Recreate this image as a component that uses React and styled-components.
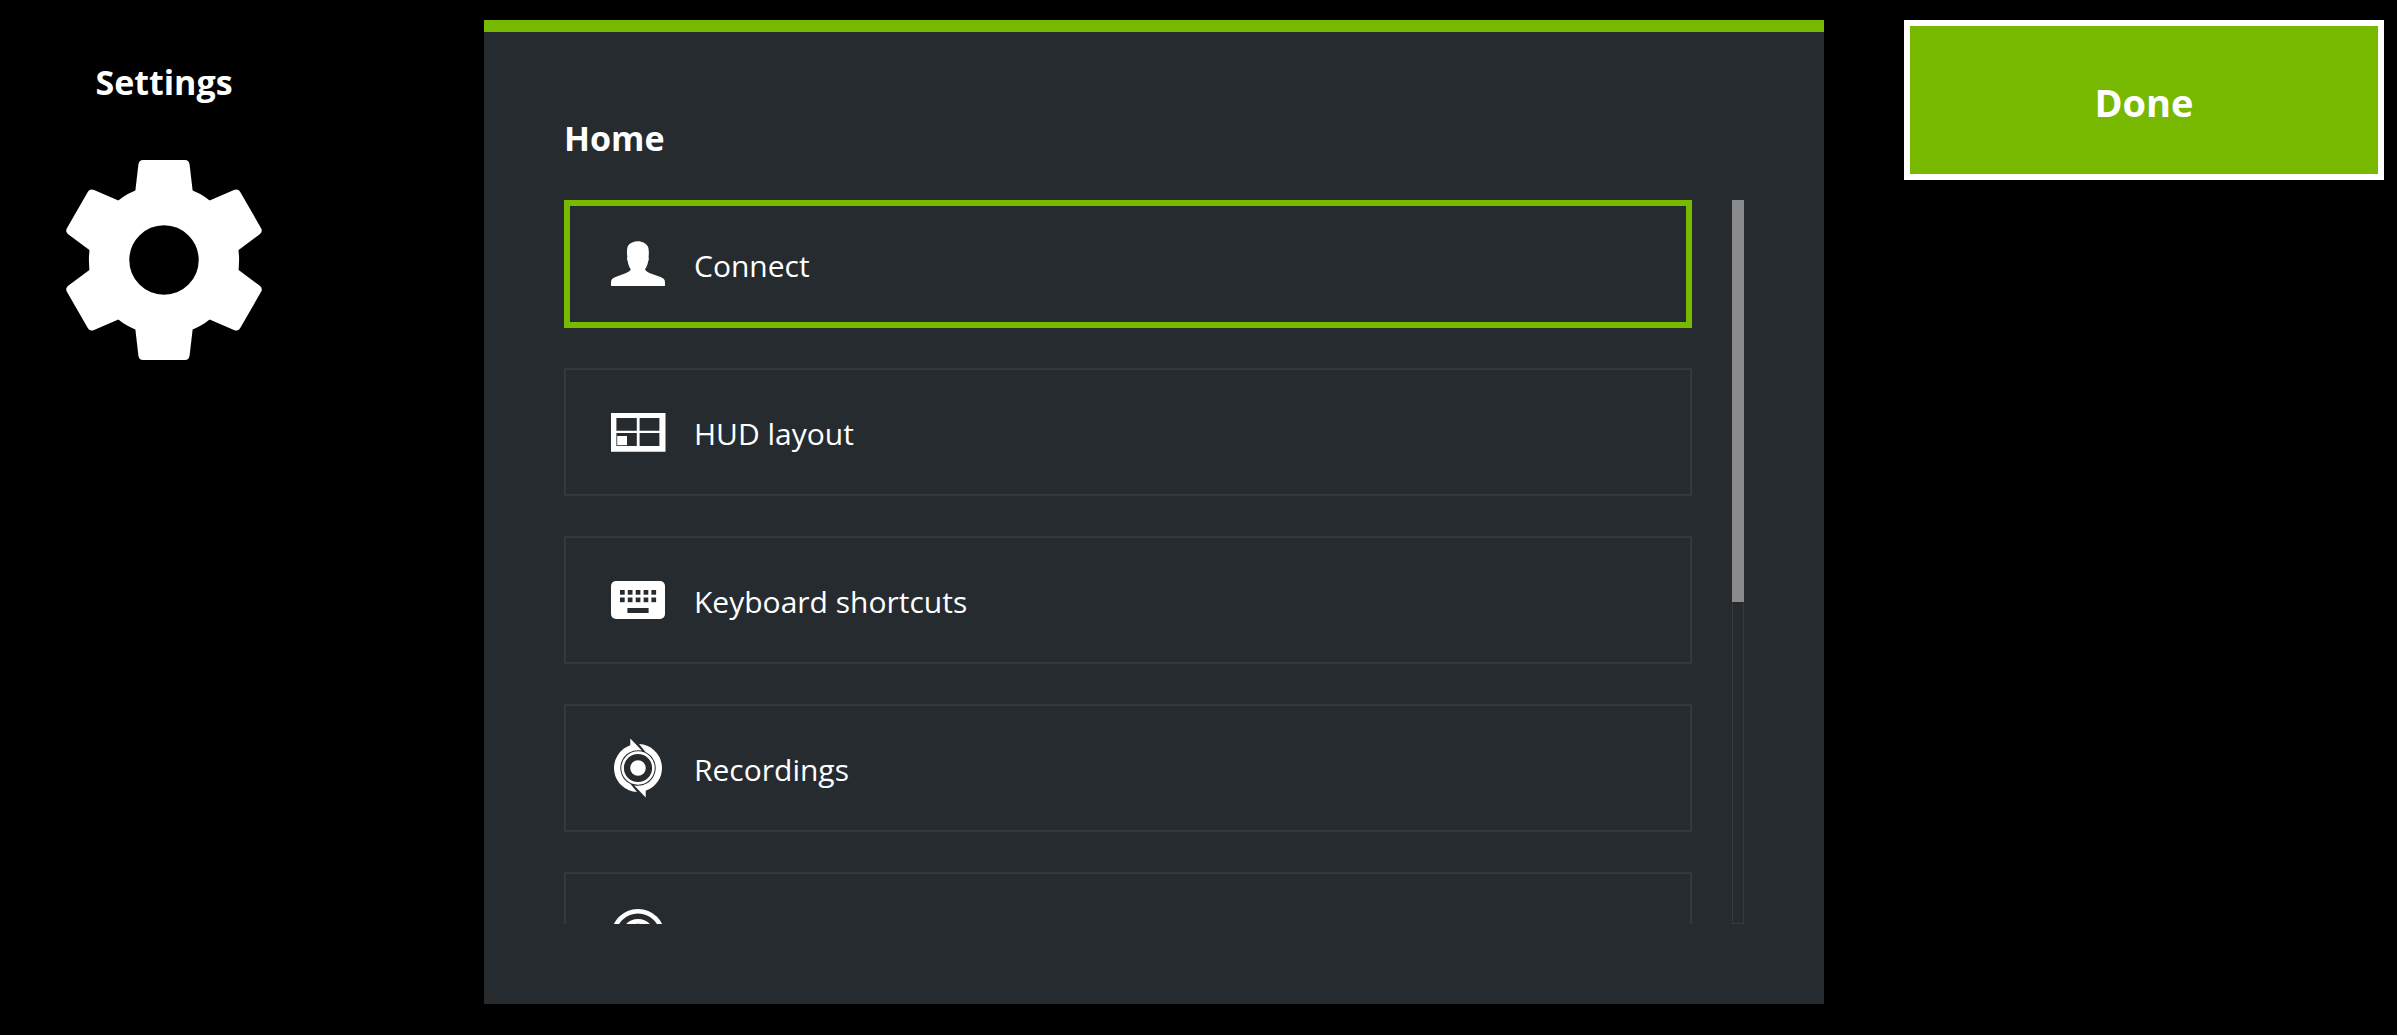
import React, { useState } from "react";
import styled, { createGlobalStyle } from "styled-components";

const GlobalStyle = createGlobalStyle`
  * {
    box-sizing: border-box;
  }

  body {
    margin: 0;
    background: #000;
    color: #fff;
    font-family: "Segoe UI", "Open Sans", "Noto Sans", sans-serif;
  }

  button {
    font-family: inherit;
    color: inherit;
    cursor: pointer;
  }
`;

// Styled components
const Page = styled.div`
  display: grid;
  grid-template-columns: 404px minmax(0, 1fr) 480px;
  column-gap: 80px;
  height: 100vh;
  padding: 20px 13px 31px 0;
`;

const Sidebar = styled.aside`
  display: flex;
  flex-direction: column;
  align-items: center;
  gap: 52px;
  padding: 36px 76px 0 0;
`;

const Heading = styled.h2`
  margin: 0;
  font-size: 34px;
  line-height: 52px;
  font-weight: 700;
`;

const GearIcon = styled.svg`
  display: block;
  width: 200px;
  height: 200px;
`;

const Panel = styled.main`
  display: flex;
  flex-direction: column;
  gap: 36px;
  min-height: 0;
  padding: 80px;
  border-top: 12px solid #76b900;
  background: #262b2f;
`;

const ListArea = styled.div`
  display: flex;
  flex: 1;
  gap: 40px;
  min-height: 0;
`;

const List = styled.nav`
  display: flex;
  flex: 1;
  flex-direction: column;
  gap: 40px;
  overflow-y: auto;
  scrollbar-width: none;
`;

const Item = styled.button`
  display: flex;
  flex: none;
  align-items: center;
  gap: 26px;
  height: 128px;
  padding: 0 44px;
  border: 0;
  background: transparent;
  box-shadow: inset 0 0 0
    ${(props) => (props.$active ? "6px #76b900" : "2px #35393c")};
  text-align: left;
  outline: none;
`;

const ItemLabel = styled.span`
  padding-top: 4px;
  font-size: 30px;
  line-height: 44px;
`;

const ItemIcon = styled.svg`
  display: block;
  flex: none;
  width: 60px;
  height: 60px;
`;

const ScrollTrack = styled.div`
  display: grid;
  grid-template-rows: 5fr 4fr;
  width: 12px;
  box-shadow: inset 0 0 0 1px #373b3e;
`;

const ScrollThumb = styled.div`
  background: #8a8b8c;
`;

const DoneButton = styled.button`
  height: 160px;
  padding: 4px 0 0;
  border: 6px solid #fff;
  background: #76b900;
  font-size: 38px;
  line-height: 52px;
  font-weight: 700;
`;

const Gear = () => (
  <GearIcon viewBox="0 0 200 200" aria-hidden="true">
    <circle cx="100" cy="100" r="54.9" fill="none" stroke="#fff" strokeWidth="40.4" />
    {[0, 60, 120, 180, 240, 300].map((angle) => (
      <path
        key={angle}
        transform={`rotate(${angle} 100 100)`}
        fill="#fff"
        d="M71.2 32 L74.4 4.5 Q75 0 79 0 H121 Q125 0 125.6 4.5 L128.8 32 L120 50 H80 Z"
      />
    ))}
  </GearIcon>
);

const PersonIcon = () => (
  <ItemIcon viewBox="0 0 60 60" fill="#fff" aria-hidden="true">
    <path d="M3 52 V48.5 C3 45.5 4.5 44.2 7.5 43 L17.5 39.2 C20.5 38 22.5 36.7 22.8 35.3 C21 32.8 20.2 30.5 19.8 27.5 C19 26.5 18.9 24.5 19.3 23 C18.7 18.5 18.9 14 20 11.8 C22 8.8 26 7.2 29.8 7.2 C34.5 7.2 38.5 9.5 40 12.8 C41 15.5 41 19.5 40.6 23 C41 24.5 40.9 26.5 40.1 27.5 C39.6 30.5 38.8 32.8 37 35.3 C37.5 36.7 39 38 42 39.2 L52.5 43 C55.5 44.2 57 45.5 57 48.5 V52 Z" />
  </ItemIcon>
);

const HudIcon = () => (
  <ItemIcon viewBox="0 0 60 60" fill="#fff" aria-hidden="true">
    <path
      fillRule="evenodd"
      d="M3 11 H57.5 V49.7 H3 Z M8.4 16 V28.8 H28.8 V16 Z M31.6 16 V28.8 H51.4 V16 Z M8.4 31 V44 H28.8 V31 Z M31.6 31 V44 H51.4 V31 Z"
    />
    <rect x="9.2" y="34" width="9.8" height="9.2" />
  </ItemIcon>
);

const KeyboardIcon = () => (
  <ItemIcon viewBox="0 0 60 60" aria-hidden="true">
    <rect x="3" y="11" width="54" height="38" rx="5" fill="#fff" />
    {[20, 27.5].map((y) =>
      [12, 19.8, 27.7, 35.6, 43.4].map((x) => (
        <rect key={`${x}-${y}`} x={x} y={y} width="4.7" height="4.7" fill="#262b2f" />
      ))
    )}
    <rect x="19.4" y="38" width="21.2" height="5" fill="#262b2f" />
  </ItemIcon>
);

const RecordIcon = () => (
  <ItemIcon viewBox="0 0 60 60" fill="#fff" aria-hidden="true">
    <circle cx="30" cy="30" r="7.8" />
    <circle cx="30" cy="30" r="15.4" fill="none" stroke="#fff" strokeWidth="2.6" />
    {[0, 180].map((angle) => (
      <path
        key={angle}
        transform={`rotate(${angle} 30 30)`}
        d="M22.3 0.5 L33.8 12.6 A17.8 17.8 0 0 0 22.5 46.1 L29 54 A24 24 0 0 1 22.3 7.3 Z"
      />
    ))}
  </ItemIcon>
);

const BroadcastIcon = () => (
  <ItemIcon viewBox="0 0 60 60" fill="none" stroke="#fff" strokeWidth="4.6" aria-hidden="true">
    <path d="M12.8 47.2 A24.5 24.5 0 1 1 47.2 47.2" />
    <path d="M19.7 40.3 A14.6 14.6 0 1 1 40.3 40.3" />
    <circle cx="30" cy="30" r="5" fill="#fff" stroke="none" />
  </ItemIcon>
);

const items = [
  { id: "connect", label: "Connect", Icon: PersonIcon },
  { id: "hud", label: "HUD layout", Icon: HudIcon },
  { id: "keyboard", label: "Keyboard shortcuts", Icon: KeyboardIcon },
  { id: "recordings", label: "Recordings", Icon: RecordIcon },
  { id: "broadcast", Icon: BroadcastIcon },
];

const App = () => {
  const [active, setActive] = useState("connect");

  return (
    <>
      <GlobalStyle />
      <Page>
        <Sidebar>
          <Heading>Settings</Heading>
          <Gear />
        </Sidebar>
        <Panel>
          <Heading>Home</Heading>
          <ListArea>
            <List>
              {items.map(({ id, label, Icon }) => (
                <Item
                  key={id}
                  type="button"
                  aria-label={label || id}
                  $active={active === id}
                  onClick={() => setActive(id)}
                >
                  <Icon />
                  {label && <ItemLabel>{label}</ItemLabel>}
                </Item>
              ))}
            </List>
            <ScrollTrack>
              <ScrollThumb />
            </ScrollTrack>
          </ListArea>
        </Panel>
        <DoneButton type="button">Done</DoneButton>
      </Page>
    </>
  );
};

export default App;
